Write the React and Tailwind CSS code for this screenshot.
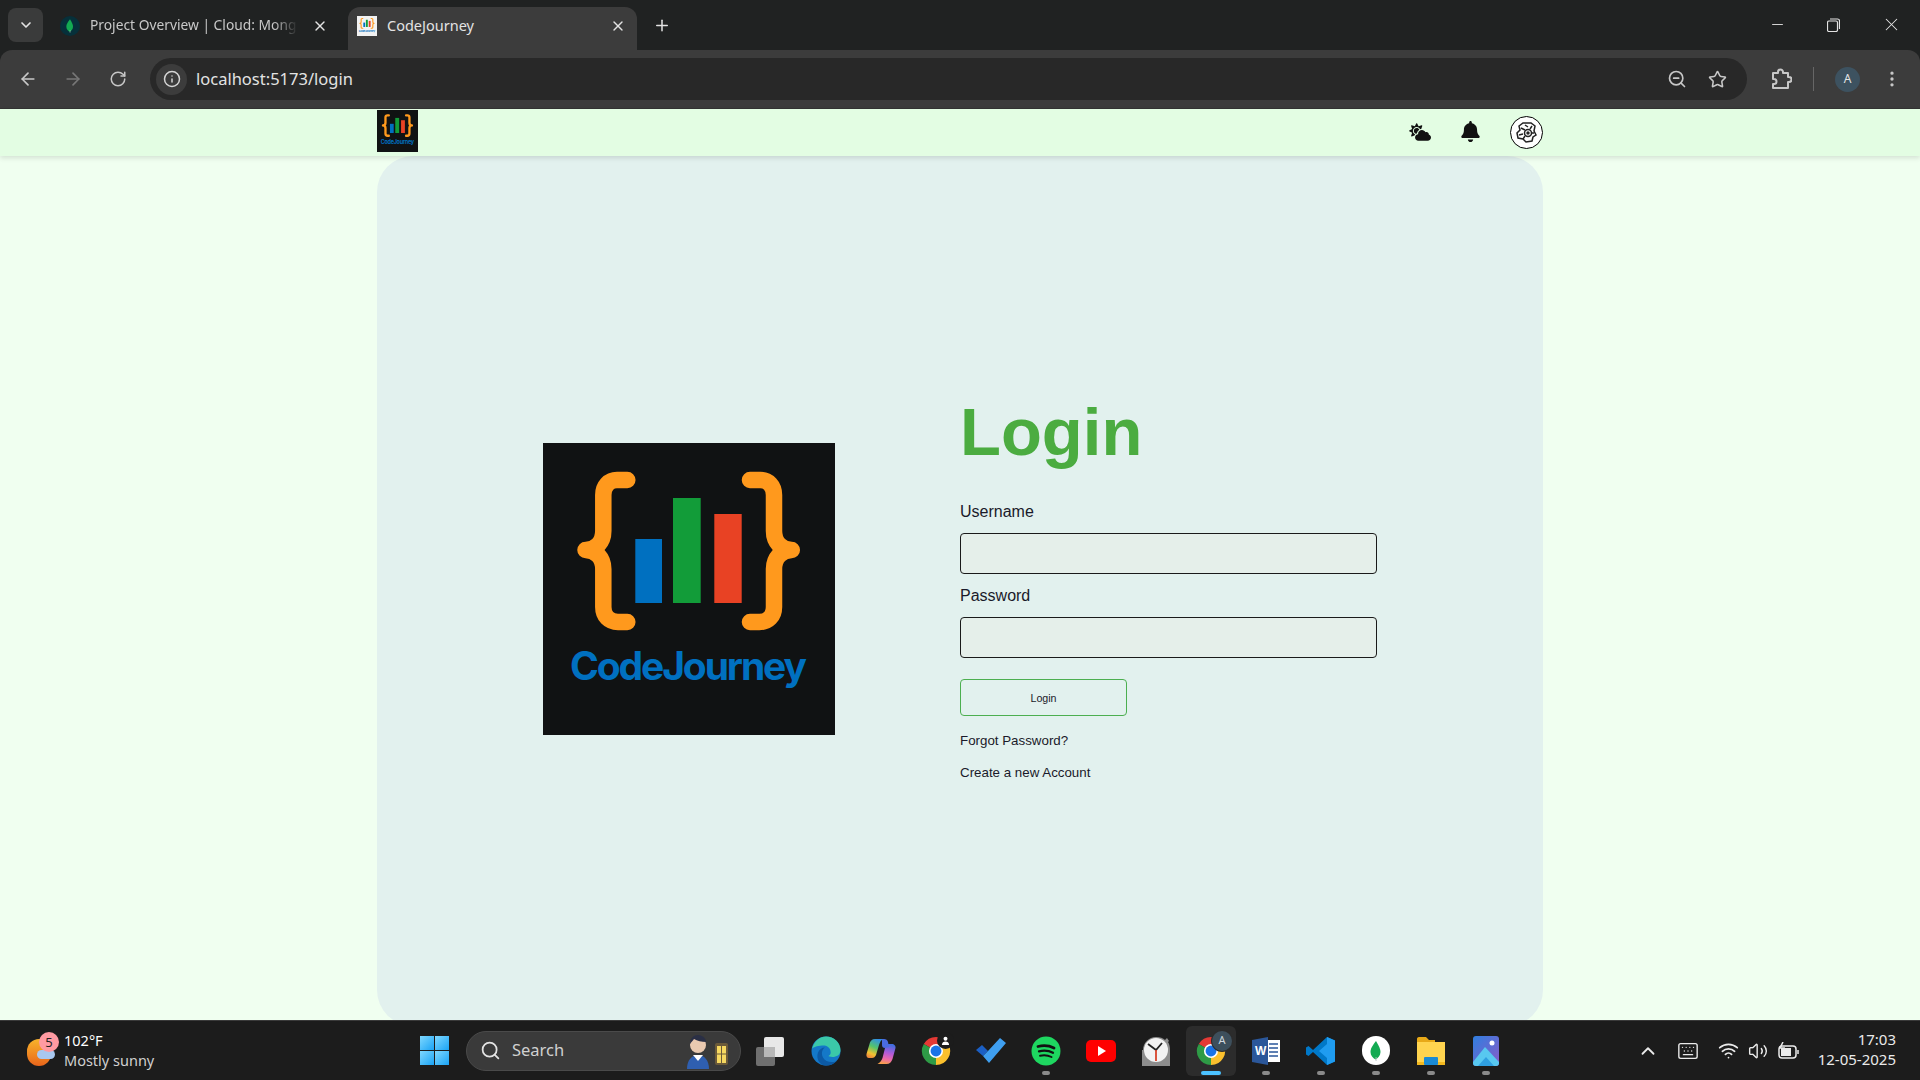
import { ArrowLeft, ArrowRight, RotateCw, Info, ZoomOut, Star, EllipsisVertical, X, Plus, ChevronDown, ChevronUp, Minus, Search, Keyboard, Wifi, Volume2 } from 'lucide-react';
import { FaCloudSun, FaBell } from 'react-icons/fa';

const uiFont = "font-['Noto_Sans',sans-serif]";

function Brace({ flip }) {
  return (
    <path
      d="M84.3 37H74C66 37 60.3 43 60.3 52V88C60.3 99 53 107 42.5 107C53 107 60.3 115 60.3 126V164C60.3 173 66 179 75 179H84.3"
      fill="none"
      stroke="#ff991d"
      strokeWidth="16.5"
      strokeLinecap="round"
      strokeLinejoin="round"
      transform={flip ? 'translate(291.3 0) scale(-1 1)' : undefined}
    />
  );
}

function Logo({ className, bg = '#101213' }) {
  return (
    <svg viewBox="0 0 292 292" preserveAspectRatio="none" className={className}>
      <rect width="292" height="292" fill={bg} />
      <Brace />
      <Brace flip />
      <rect x="92.3" y="96" width="26.7" height="64" fill="#0070c0" />
      <rect x="130" y="55" width="27.7" height="105" fill="#129c39" />
      <rect x="171.3" y="71" width="27.4" height="89" fill="#e84224" />
      <text x="27" y="237" fontSize="39" fontWeight="700" fill="#0070c0" fontFamily="Inter, sans-serif" textLength="237" lengthAdjust="spacing">CodeJourney</text>
    </svg>
  );
}

function Leaf({ className }) {
  return (
    <svg viewBox="0 0 24 24" className={className}>
      <path d="M12 2C8 7 6.5 10 6.5 13c0 3.5 2.5 6 5 7.5 2.5-1.5 5-4 5-7.5 0-3-1.500-6-4.500-11z" fill="#13aa52" />
      <rect x="11.600" y="18" width="0.9" height="4" fill="#b8c4c2" />
    </svg>
  );
}

function Chrome({ size = 30 }) {
  return (
    <svg width={size} height={size} viewBox="0 0 32 32">
      <path d="M16 16L3 8.500A15 15 0 0 1 29 8.500z" fill="#e53935" />
      <path d="M16 16L29 8.500A15 15 0 0 1 16 31z" fill="#fbc02d" />
      <path d="M16 16L16 31A15 15 0 0 1 3 8.500z" fill="#2e9b46" />
      <circle cx="16" cy="16" r="7.500" fill="#fff" />
      <circle cx="16" cy="16" r="5.800" fill="#1a73e8" />
    </svg>
  );
}

function Dot({ active }) {
  return <span className={active ? 'block h-[4px] w-[20px] rounded-full bg-[#4cc2ff]' : 'block h-[4px] w-[8px] rounded-full bg-[#8a8a8a]'} />;
}

function TaskIcon({ children, dot, active }) {
  return (
    <div className="relative flex h-[50px] w-[55px] items-center justify-center">
      {active ? <span className="absolute inset-y-0 left-[2.500px] right-[2.500px] rounded-md bg-[#2c2c2c]" /> : null}
      <div className="relative flex items-center justify-center">{children}</div>
      {dot || active ? (
        <div className="absolute bottom-[1px] left-0 flex w-full justify-center">
          <Dot active={active} />
        </div>
      ) : null}
    </div>
  );
}

function TaskbarIcons() {
  return (
    <div className="flex items-center">
      <TaskIcon>
        <svg width="30" height="30" viewBox="0 0 30 30">
          <rect x="0" y="11" width="19" height="19" rx="2" fill="#6f6f6f" />
          <rect x="8" y="1" width="20" height="20" rx="2" fill="#e8e8e8" />
          <rect x="8" y="11" width="11" height="10" fill="#b8b8b8" />
        </svg>
      </TaskIcon>
      <TaskIcon>
        <svg width="30" height="30" viewBox="0 0 30 30">
          <circle cx="15" cy="15" r="14.500" fill="#1478c8" />
          <path d="M1 13C3 5 9 .5 15 .5c8 0 14.500 6 14.500 13.500 0 5-4 7-8 7-2.500 0-4-1-4-1 2-1 2.500-3 2-5C19 11 15 9 11 9.500 6 10 2 11 1 13z" fill="#3bc8a8" />
          <path d="M14 29.500c-6-1-9-7-7-13 1-3 4-5 7-5-3 2-4 6-2 10 1.500 3 5 4.500 9 4.500 2 0 3.500-.5 4.500-1-3 3.500-7 5-11.500 4.500z" fill="#0c59a4" />
        </svg>
      </TaskIcon>
      <TaskIcon>
        <svg width="30" height="26" viewBox="0 0 30 26">
          <defs>
            <linearGradient id="copL" x1="0.7" y1="0" x2="0.3" y2="1">
              <stop offset="0" stopColor="#2f8fe8" />
              <stop offset="0.45" stopColor="#55c46a" />
              <stop offset="0.8" stopColor="#f3c230" />
              <stop offset="1" stopColor="#f08a3c" />
            </linearGradient>
            <linearGradient id="copR" x1="0.6" y1="0" x2="0.4" y2="1">
              <stop offset="0" stopColor="#3f6ee0" />
              <stop offset="0.45" stopColor="#b45ad8" />
              <stop offset="0.75" stopColor="#ee6aa8" />
              <stop offset="1" stopColor="#f7a04a" />
            </linearGradient>
          </defs>
          <path d="M9 1h8c-2 1-3 3-4 6l-3 10c-1 2-2 3-4 3H3c-2 0-3-2-2.500-4l3-10C4 3 6 1 9 1z" fill="url(#copL)" />
          <path d="M21 6h5c2 0 4 2 3.500 4l-3 11c-1 3-3 5-6 5h-9c2-1 4-3 5-6l2-8c.5-2 1.500-5 2.500-6z" fill="url(#copR)" />
          <path d="M16 1h2c2 0 3.500 1 4 3l1 5-4 1c-2 0-3-1-3-3z" fill="#4a6be0" />
        </svg>
      </TaskIcon>
      <TaskIcon>
        <Chrome />
        <span className="absolute -right-[3px] -top-[4px] flex h-[17px] w-[17px] items-center justify-center rounded-full bg-[#1c1c1c]">
          <svg width="9" height="9" viewBox="0 0 10 10">
            <circle cx="5" cy="3" r="2.200" fill="#fff" />
            <path d="M1 10c0-3 2-4 4-4s4 1 4 4z" fill="#fff" />
          </svg>
        </span>
      </TaskIcon>
      <TaskIcon>
        <svg width="30" height="26" viewBox="0 0 30 26">
          <path d="M0 12l6-5 6 6-5 5z" fill="#1b5fc4" />
          <path d="M7 18l5-5L24 0l6 5-17 20z" fill="#3f9ff0" />
        </svg>
      </TaskIcon>
      <TaskIcon dot>
        <svg width="30" height="30" viewBox="0 0 30 30">
          <circle cx="15" cy="15" r="14.500" fill="#1ed760" />
          <path d="M7 10.500c6-1.500 11-1 16 1.500" fill="none" stroke="#121212" strokeWidth="2.800" strokeLinecap="round" />
          <path d="M8 15.300c5-1.200 10-.7 14 1.500" fill="none" stroke="#121212" strokeWidth="2.300" strokeLinecap="round" />
          <path d="M9 19.700c4-.9 8-.5 11.500 1.300" fill="none" stroke="#121212" strokeWidth="1.900" strokeLinecap="round" />
        </svg>
      </TaskIcon>
      <TaskIcon>
        <svg width="30" height="22" viewBox="0 0 30 22">
          <rect width="30" height="22" rx="5" fill="#f00" />
          <path d="M12 6l8 5-8 5z" fill="#fff" />
        </svg>
      </TaskIcon>
      <TaskIcon>
        <svg width="30" height="30" viewBox="0 0 30 30">
          <path d="M2 14C2 7 8 1 15 1c4 0 7 1 9 3l2-2 2 3-1 1c1.500 2 2 5 2 8v16H1V14z" fill="#8d8d8d" />
          <circle cx="15" cy="14" r="12" fill="#f2f2f2" />
          <path d="M7 8l8 6 6-7" fill="none" stroke="#222" strokeWidth="1.800" />
          <path d="M15 14v11" stroke="#d8432a" strokeWidth="1.800" />
        </svg>
      </TaskIcon>
      <TaskIcon active>
        <Chrome />
        <span className="absolute -right-[6px] -top-[5px] flex h-[20px] w-[20px] items-center justify-center rounded-full bg-[#3d4f5c] text-[11px] text-[#cfd8de] shadow-[0_0_0_1px_#2c2c2c]">A</span>
      </TaskIcon>
      <TaskIcon dot>
        <svg width="28" height="28" viewBox="0 0 28 28">
          <rect x="10" y="3" width="18" height="22" fill="#fff" />
          <path d="M17 7h9M17 11h9M17 15h9M17 19h9" stroke="#2b579a" strokeWidth="1.500" />
          <path d="M0 3l16-3v28L0 25z" fill="#2b579a" />
          <text x="3" y="18" fontSize="12" fontWeight="700" fill="#fff" fontFamily="'Liberation Sans', sans-serif">W</text>
        </svg>
      </TaskIcon>
      <TaskIcon dot>
        <svg width="30" height="30" viewBox="0 0 30 30">
          <path d="M21 1l8 3.500v21L21 29 7 16 2.500 20 0 18.500V11.500L2.500 10 7 14z" fill="#0078c8" />
          <path d="M21 1l8 3.500v21L21 29zM21 8l-8 7 8 7z" fill="#1f9cf0" fillRule="evenodd" />
        </svg>
      </TaskIcon>
      <TaskIcon dot>
        <div className="flex h-[29px] w-[28px] items-center justify-center rounded-full bg-white">
          <Leaf className="h-[24px] w-[24px]" />
        </div>
      </TaskIcon>
      <TaskIcon dot>
        <svg width="30" height="30" viewBox="0 0 30 30">
          <path d="M1 3c0-1 .5-2 2-2h7l3 3h6v3H1z" fill="#e8a918" />
          <rect x="1" y="6" width="28" height="23" fill="#ffd44f" />
          <path d="M1 26h28v3H1z" fill="#f2b81f" />
          <rect x="8" y="21" width="14" height="8" rx="1" fill="#1a8ad4" />
        </svg>
      </TaskIcon>
      <TaskIcon dot>
        <svg width="26" height="30" viewBox="0 0 26 30">
          <defs>
            <linearGradient id="photoBg" x1="0" y1="0" x2="1" y2="1">
              <stop offset="0" stopColor="#2f7fe0" />
              <stop offset="1" stopColor="#8a5bc8" />
            </linearGradient>
          </defs>
          <rect width="26" height="30" rx="3" fill="url(#photoBg)" />
          <circle cx="19" cy="7" r="2.500" fill="#fff" />
          <path d="M0 26l12-15 14 15v1a3 3 0 0 1-3 3H3a3 3 0 0 1-3-3z" fill="#58c8f0" />
          <path d="M5 30l8-9 8 9z" fill="#2f9fe0" />
        </svg>
      </TaskIcon>
    </div>
  );
}

function BrowserChrome() {
  return (
    <div className={`${uiFont} shrink-0 bg-[#202222] text-[#e3e3e3]`}>
      <div className="flex h-[50px] items-end pl-2">
        <div className="mb-[8px] flex h-[34px] w-[35px] items-center justify-center rounded-lg bg-[#3a3b3b]">
          <ChevronDown size={16} strokeWidth={2.500} />
        </div>
        <div className="flex h-[43px] w-[305px] items-center pb-[6px] pl-[17px]">
          <span className="flex h-[20px] w-[20px] items-center justify-center rounded-full bg-[#06303a]">
            <Leaf className="h-[16px] w-[16px]" />
          </span>
          <span className="ml-[10px] w-[208px] overflow-hidden whitespace-nowrap text-[13.800px] text-[#c8c8c8] [mask-image:linear-gradient(to_right,black_88%,transparent)]">Project Overview | Cloud: Mong</span>
          <X size={16} className="ml-[14px]" strokeWidth={2} />
        </div>
        <div className="flex h-[43px] w-[289px] items-center rounded-t-xl bg-[#3c3c3c] pb-[6px] pl-[9px]">
          <span className="h-[20px] w-[20px] overflow-hidden">
            <Logo className="h-[20px] w-[20px]" bg="#f2f2f2" />
          </span>
          <span className="ml-[10px] w-[223px] text-[14.500px]">CodeJourney</span>
          <X size={16} strokeWidth={2} />
        </div>
        <div className="mb-[16px] ml-[16px] flex h-[18px] w-[18px] items-center justify-center">
          <Plus size={19} />
        </div>
        <div className="mb-[15px] ml-auto flex items-center">
          <div className="flex w-[57px] justify-center"><Minus size={17} strokeWidth={1.300} /></div>
          <div className="flex w-[57px] justify-center pr-[2px]">
            <svg width="13" height="14" viewBox="0 0 13 14" fill="none" stroke="#e3e3e3" strokeWidth="1.200">
              <rect x="0.500" y="3" width="10" height="10.500" rx="1.500" />
              <path d="M3 1h7.500a2 2 0 0 1 2 2v8" />
            </svg>
          </div>
          <div className="flex w-[57px] justify-center"><X size={21} strokeWidth={1.200} /></div>
        </div>
      </div>
      <div className="flex h-[59px] items-start rounded-t-xl border-b border-[#333] bg-[#3c3c3c] pt-[8px]">
        <div className="flex h-[42px] items-center pl-[18px] text-[#c7c7c7]">
          <ArrowLeft size={20} />
          <ArrowRight size={20} className="ml-[25px] text-[#777]" />
          <RotateCw size={18} className="ml-[26px]" />
        </div>
        <div className="ml-[23px] flex h-[42px] w-[1597px] items-center rounded-full bg-[#282828] pl-[6px] pr-[20px]">
          <span className="flex h-[31px] w-[31px] items-center justify-center rounded-full bg-[#3c3c3c]">
            <Info size={18} className="text-[#d5d5d5]" />
          </span>
          <span className="ml-[9px] pt-[1px] text-[16.500px]">localhost:5173/login</span>
          <ZoomOut size={20} className="ml-auto text-[#c7c7c7]" />
          <Star size={19} className="ml-[21px] text-[#c7c7c7]" strokeWidth={2} />
        </div>
        <div className="flex h-[42px] items-center text-[#c7c7c7]">
          <svg width="22" height="22" viewBox="0 0 22 22" fill="none" stroke="currentColor" strokeWidth="2" strokeLinejoin="round" className="ml-[23px]">
            <path d="M3 5h5V4a2.500 2.500 0 0 1 5 0v1h5v4h1a2.500 2.500 0 0 1 0 5h-1v6H3v-4h1a2.500 2.500 0 0 0 0-5H3z" />
          </svg>
          <span className="ml-[21px] h-[24px] w-[1px] bg-[#666]" />
          <span className="ml-[21px] flex h-[25px] w-[25px] items-center justify-center rounded-full bg-[#3d5260] text-[12px] text-[#e3e3e3]">A</span>
          <EllipsisVertical size={20} className="ml-[22px]" />
        </div>
      </div>
    </div>
  );
}

function NavBar() {
  return (
    <nav className="relative z-10 h-[47px] shrink-0 bg-[#e3fde3] shadow-[0_2px_5px_rgba(0,0,0,0.12)]">
      <div className="mx-auto flex h-full w-[1166px] items-center">
        <Logo className="mt-[1px] h-[42px] w-[41px] self-start" />
        <FaCloudSun className="mb-[2px] ml-auto text-[22px] text-[#111]" />
        <FaBell className="mb-[2px] ml-[29px] text-[21px] text-[#111]" />
        <div className="ml-[29px] flex h-[33px] w-[33px] items-center justify-center rounded-full border border-black bg-white">
          <svg width="25" height="25" viewBox="0 0 25 25" fill="none" stroke="#222" strokeWidth="1.500">
            <path d="M5 6l4-3h8l4 3-1 5 2 4-3 2-1 4-6 1-3-3-5-1-1-5 3-3z" />
            <circle cx="14" cy="13" r="3.500" />
            <circle cx="14" cy="13" r="1" fill="#222" />
            <path d="M7 8l4 2M18 6l-2 3M5 15l4-1M9 19l2-3M20 13l-2 0M11 5l3 2" />
          </svg>
        </div>
      </div>
    </nav>
  );
}

function LoginCard() {
  return (
    <main className="min-h-0 flex-1 bg-[#f0fff0]">
      <div className="mx-auto flex h-[870px] w-[1166px] items-start rounded-[36px] bg-[#e2f1ee] font-['Liberation_Sans',sans-serif] text-[#1a1a2a]">
        <Logo className="ml-[166px] mt-[287px] h-[292px] w-[292px] shrink-0" />
        <form className="ml-[125px] mt-[238px] flex w-[417px] flex-col">
          <h1 className="text-[67px] font-bold leading-[76px] text-[#4bac40]">Login</h1>
          <label className="mt-[33px] text-[16px] leading-[18px]">Username</label>
          <input type="text" className="mt-[12px] h-[41px] rounded border border-[#1a1a1a] bg-[#e5efea]" />
          <label className="mt-[13px] text-[16px] leading-[18px]">Password</label>
          <input type="password" className="mt-[12px] h-[41px] rounded border border-[#1a1a1a] bg-[#e5efea]" />
          <button type="button" className="mt-[21px] h-[37px] w-[167px] rounded border border-[#4caf50] text-[10.670px]">Login</button>
          <a className="mt-[17px] text-[13.330px] leading-[16px]">Forgot Password?</a>
          <a className="mt-[16px] text-[13.330px] leading-[16px]">Create a new Account</a>
        </form>
      </div>
    </main>
  );
}

function Taskbar() {
  return (
    <footer className={`${uiFont} relative z-10 flex h-[60px] shrink-0 items-center border-t border-[#3a3a3a] bg-[#1c1c1c] text-white`}>
      <div className="flex w-[420px] items-center pl-[27px]">
        <div className="relative mb-[3px] h-[34px] w-[30px]">
          <span className="absolute bottom-0 left-0 h-[27px] w-[24px] rounded-full bg-gradient-to-b from-[#f7b32b] to-[#e8641b]" />
          <span className="absolute bottom-[7px] left-[10px] h-[9px] w-[18px] rounded-full bg-[#a9c8f0]" />
          <span className="absolute left-[12px] top-0 flex h-[20px] w-[20px] items-center justify-center rounded-full bg-[#ff9aa2] text-[13px] leading-none text-[#222]">5</span>
        </div>
        <div className="mb-[1px] ml-[7px] flex flex-col text-[14.500px] leading-[20px]">
          <span>102°F</span>
          <span className="text-[#d0d0d0]">Mostly sunny</span>
        </div>
      </div>
      <svg width="29" height="29" viewBox="0 0 29 29" className="shrink-0">
        <defs>
          <linearGradient id="winA" x1="0" y1="0" x2="1" y2="1">
            <stop offset="0" stopColor="#7fd8ff" />
            <stop offset="1" stopColor="#1aa3f5" />
          </linearGradient>
        </defs>
        <rect x="0" y="0" width="14" height="14" fill="url(#winA)" />
        <rect x="15" y="0" width="14" height="14" fill="url(#winA)" />
        <rect x="0" y="15" width="14" height="14" fill="url(#winA)" />
        <rect x="15" y="15" width="14" height="14" fill="url(#winA)" />
      </svg>
      <div className="ml-[17px] flex h-[40px] w-[275px] shrink-0 items-center rounded-full border border-[#4a4a4a] bg-[#3a3a3a] pl-[13px]">
        <Search size={21} className="text-[#e3e3e3]" />
        <span className="ml-[11px] text-[16.500px] text-[#d0d0d0]">Search</span>
        <svg width="46" height="36" viewBox="0 0 46 36" className="ml-auto mr-[9px]">
          <circle cx="13" cy="12" r="8" fill="#e9c9b0" />
          <path d="M5 11c0-6 4-9 8-9s8 3 8 7c-4 0-9-1-12-3-1 2-3 3-4 5z" fill="#2a2f45" />
          <path d="M2 36c0-9 5-14 11-14s11 5 11 14z" fill="#2f5fb0" />
          <path d="M8 22h10l-5 6z" fill="#fff" />
          <rect x="30" y="10" width="13" height="22" rx="2" fill="#6b5a3a" />
          <rect x="32" y="13" width="9" height="17" fill="#f6d860" />
          <path d="M36.500 13v17M32 21h9" stroke="#6b5a3a" strokeWidth="1" />
        </svg>
      </div>
      <div className="ml-[2.500px] shrink-0">
        <TaskbarIcons />
      </div>
      <div className="flex flex-1 items-center pl-[123px] pr-[24px] text-[#eaeaea]">
        <ChevronUp size={22} strokeWidth={2} />
        <Keyboard size={22} className="ml-[18px]" strokeWidth={1.500} />
        <Wifi size={21} className="ml-[19px]" strokeWidth={2} />
        <Volume2 size={20} className="ml-[9px]" strokeWidth={1.700} />
        <svg width="22" height="18" viewBox="0 0 22 18" className="ml-[10px]" fill="none" stroke="#eaeaea" strokeWidth="1.500">
          <rect x="1" y="4" width="17" height="12" rx="3" />
          <rect x="3" y="6" width="10" height="8" fill="#eaeaea" stroke="none" />
          <path d="M20 8v4" />
          <path d="M5 0L2 6h4l-2 5" />
        </svg>
        <div className="mb-[4px] ml-auto flex flex-col items-end text-[15px] leading-[20px]">
          <span>17:03</span>
          <span>12-05-2025</span>
        </div>
      </div>
    </footer>
  );
}

export default function App() {
  return (
    <div className="flex h-screen w-full flex-col overflow-hidden bg-[#f0fff0]">
      <BrowserChrome />
      <NavBar />
      <LoginCard />
      <Taskbar />
    </div>
  );
}
